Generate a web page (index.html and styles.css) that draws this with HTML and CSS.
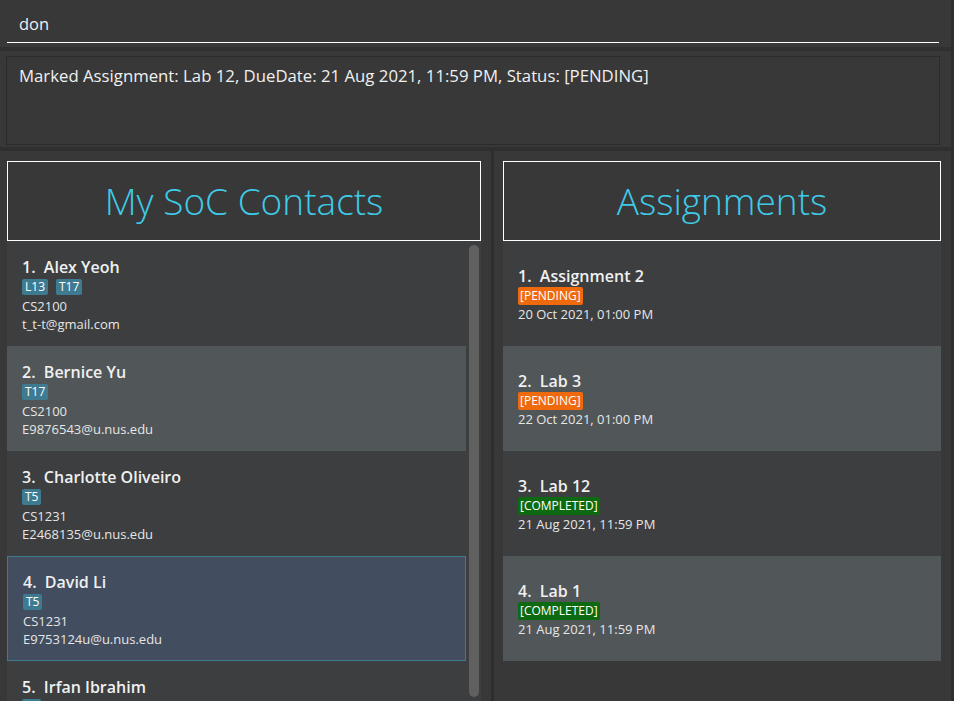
FILE: index.html
```html
<!DOCTYPE html>
<html>
<head>
<meta charset="utf-8">
<link rel="stylesheet" href="styles.css">
</head>
<body>
<div class="app">
  <div class="command">
    <div class="command-input">don</div>
  </div>
  <div class="band"></div>
  <div class="result-wrap">
    <div class="result">Marked Assignment: Lab 12, DueDate: 21 Aug 2021, 11:59 PM, Status: [PENDING]</div>
  </div>
  <div class="band"></div>
  <div class="main">
    <div class="pane pane-left">
      <div class="title">My SoC Contacts</div>
      <div class="list-wrap">
        <div class="list">
          <div class="cell odd">
            <div class="name">1.&nbsp; Alex Yeoh</div>
            <div class="tags"><span class="tag">L13</span><span class="tag">T17</span></div>
            <div class="detail">CS2100</div>
            <div class="detail">t_t-t@gmail.com</div>
          </div>
          <div class="cell even">
            <div class="name">2.&nbsp; Bernice Yu</div>
            <div class="tags"><span class="tag">T17</span></div>
            <div class="detail">CS2100</div>
            <div class="detail">E9876543@u.nus.edu</div>
          </div>
          <div class="cell odd">
            <div class="name">3.&nbsp; Charlotte Oliveiro</div>
            <div class="tags"><span class="tag">T5</span></div>
            <div class="detail">CS1231</div>
            <div class="detail">E2468135@u.nus.edu</div>
          </div>
          <div class="cell selected">
            <div class="name">4.&nbsp; David Li</div>
            <div class="tags"><span class="tag">T5</span></div>
            <div class="detail">CS1231</div>
            <div class="detail">E9753124u@u.nus.edu</div>
          </div>
          <div class="cell odd">
            <div class="name">5.&nbsp; Irfan Ibrahim</div>
            <div class="tags"><span class="tag">T5</span></div>
            <div class="detail">CS1231</div>
            <div class="detail">E1234567@u.nus.edu</div>
          </div>
        </div>
        <div class="scrollbar"><div class="thumb"></div></div>
      </div>
    </div>
    <div class="splitter"></div>
    <div class="pane pane-right">
      <div class="title">Assignments</div>
      <div class="alist">
        <div class="acell odd">
          <div class="name">1.&nbsp; Assignment 2</div>
          <div class="badge-row"><span class="badge pending">[PENDING]</span></div>
          <div class="detail">20 Oct 2021, 01:00 PM</div>
        </div>
        <div class="acell even">
          <div class="name">2.&nbsp; Lab 3</div>
          <div class="badge-row"><span class="badge pending">[PENDING]</span></div>
          <div class="detail">22 Oct 2021, 01:00 PM</div>
        </div>
        <div class="acell odd">
          <div class="name">3.&nbsp; Lab 12</div>
          <div class="badge-row"><span class="badge completed">[COMPLETED]</span></div>
          <div class="detail">21 Aug 2021, 11:59 PM</div>
        </div>
        <div class="acell even">
          <div class="name">4.&nbsp; Lab 1</div>
          <div class="badge-row"><span class="badge completed">[COMPLETED]</span></div>
          <div class="detail">21 Aug 2021, 11:59 PM</div>
        </div>
      </div>
    </div>
  </div>
</div>
</body>
</html>
```

FILE: styles.css
```css
* { box-sizing: border-box; }
html, body {
  margin: 0;
  padding: 0;
  background: #383838;
  font-family: "Open Sans", "Noto Sans", sans-serif;
  color: #f2f2f2;
}
.app {
  width: 954px;
  height: 701px;
  overflow: hidden;
  display: flex;
  flex-direction: column;
  border-right: 3px solid #2e2e2e;
}
.command {
  height: 47px;
  padding: 0 12px 0 7px;
}
.command-input {
  height: 43px;
  border-bottom: 1px solid #ffffff;
  padding: 12px 0 0 12px;
  font-size: 16.5px;
  line-height: 24px;
  color: #f0f0f0;
}
.band {
  height: 4px;
  background: #2f2f2f;
}
.result-wrap {
  padding: 5px 11px 2px 6px;
}
.result {
  height: 89px;
  border: 1px solid #2b2b2b;
  padding: 7px 12px;
  font-size: 16.75px;
  line-height: 24px;
  color: #f0f0f0;
}
.main {
  flex: 1;
  display: flex;
  min-height: 0;
}
.pane {
  display: flex;
  flex-direction: column;
  min-height: 0;
}
.pane-left {
  width: 491px;
  padding: 10px 10px 0 7px;
}
.splitter {
  width: 3px;
  background: #2e2e2e;
}
.pane-right {
  flex: 1;
  padding: 10px 10px 0 9px;
}
.title {
  height: 80px;
  flex: none;
  border: 1px solid #ffffff;
  display: flex;
  align-items: center;
  justify-content: center;
  font-size: 37px;
  font-weight: 300;
  color: #3fcbe8;
  padding-bottom: 2px;
}
.list-wrap {
  flex: 1;
  display: flex;
  background: #3c3e3f;
  min-height: 0;
}
.list {
  width: 459px;
  display: flex;
  flex-direction: column;
}
.cell {
  height: 105px;
  flex: none;
  display: flex;
  flex-direction: column;
  justify-content: center;
  padding: 2px 15px 0 15px;
}
.odd { background: #3c3e3f; }
.even { background: #515658; }
.selected {
  background: #424d5f;
  border: 1px solid #3e7b91;
  padding-left: 15px;
}
.name {
  font-size: 16px;
  font-weight: 600;
  line-height: 22px;
  color: #f0f0f0;
}
.tags {
  display: flex;
  gap: 8px;
  margin: 1px 0 2px;
}
.tag {
  background: #3e7b91;
  color: #ffffff;
  font-size: 12px;
  line-height: 16px;
  height: 16px;
  padding: 0 3px;
  border-radius: 2px;
}
.detail {
  font-size: 13px;
  line-height: 18px;
  color: #e6e6e6;
}
.scrollbar {
  width: 15px;
  padding: 4px 2px 4px 3px;
}
.thumb {
  height: 452px;
  background: #606060;
  border-radius: 5px;
}
.alist {
  display: flex;
  flex-direction: column;
}
.acell {
  height: 105px;
  display: flex;
  flex-direction: column;
  justify-content: center;
  padding: 0 15px 0 15px;
}
.badge-row {
  display: flex;
  height: 18px;
}
.badge {
  font-size: 12px;
  line-height: 18px;
  height: 18px;
  padding: 0 2px;
  border-radius: 2px;
  color: #ffffff;
}
.pending { background: #ee6a0c; }
.completed { background: #0e6a10; }
```
